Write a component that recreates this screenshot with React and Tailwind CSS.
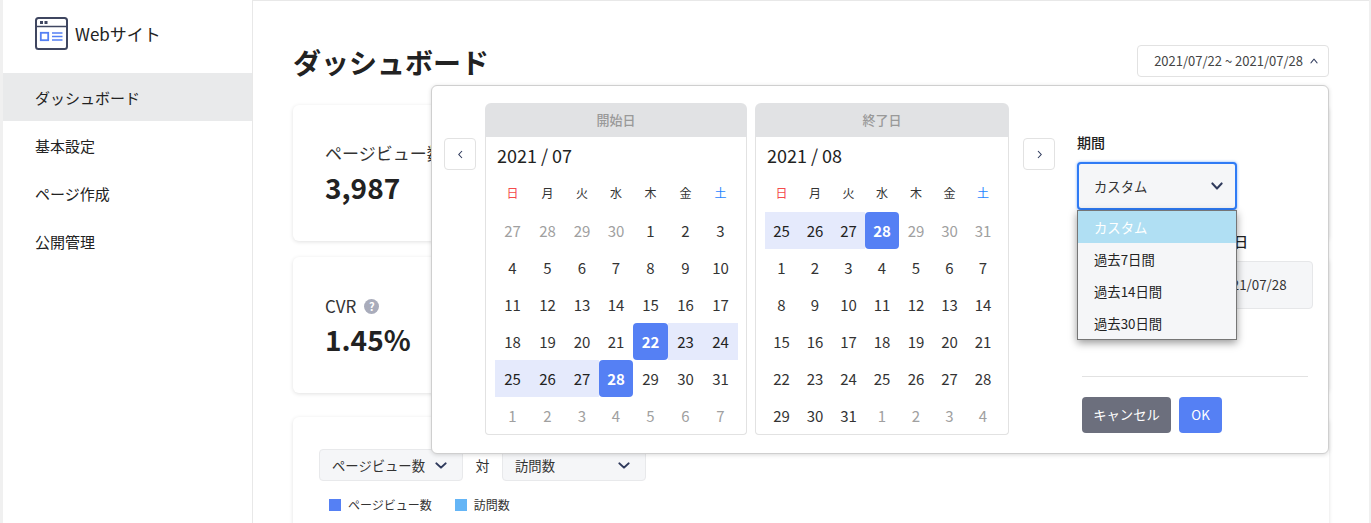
const font = { fontFamily: '"Noto Sans CJK JP", "Noto Sans", sans-serif' };

const Chevron = ({ up, w = 12, h = 8, sw = 2.2, className = "" }) => (
  <svg width={w} height={h} viewBox="0 0 13 8" preserveAspectRatio="none" className={className} fill="none" stroke="#2f3a5c" strokeWidth={sw} strokeLinecap="round" strokeLinejoin="round">
    <path d={up ? "M1.5 6.5 L6.5 1.5 L11.5 6.5" : "M1.5 1.5 L6.5 6.5 L11.5 1.5"} />
  </svg>
);

const Logo = () => (
  <svg width="33" height="33" viewBox="0 0 33 33" fill="none">
    <rect x="1" y="1" width="31" height="31" rx="2.5" stroke="#3f4660" strokeWidth="2" />
    <path d="M1 9.5 H32" stroke="#3f4660" strokeWidth="1.5" />
    <rect x="5" y="4" width="3" height="3" fill="#3f4660" />
    <rect x="9.5" y="4" width="3" height="3" fill="#3f4660" />
    <rect x="5.8" y="15.8" width="7.4" height="7.4" stroke="#5580f4" strokeWidth="1.8" />
    <path d="M17 16 H27.5 M17 19.5 H27.5 M17 23 H27.5" stroke="#5580f4" strokeWidth="1.6" />
  </svg>
);

const Nav = ({ label, active }) => (
  <div className={`h-12 flex items-center pl-8 pt-[2px] text-[15px] text-[#222] ${active ? "bg-[#e9eaeb]" : ""}`}>{label}</div>
);

const Sidebar = () => (
  <aside className="w-[250px] shrink-0 bg-white border-r border-[#e8e8e8]">
    <div className="h-[73px] flex items-start pl-8 pt-[17px] gap-[7px]">
      <Logo />
      <span className="text-[17px] leading-[33px] text-[#222]">Webサイト</span>
    </div>
    <Nav label="ダッシュボード" active />
    <Nav label="基本設定" />
    <Nav label="ページ作成" />
    <Nav label="公開管理" />
  </aside>
);

const StatCard = ({ label, value, help, className = "" }) => (
  <div className={`h-[136px] bg-white rounded-md shadow-[0_1px_4px_rgba(0,0,0,0.12)] pl-8 ${help ? "pt-[36px]" : "pt-[35px]"} ${className}`}>
    <div className="flex items-center gap-2 h-[26px] text-[17px] text-[#333]">
      {label}
      {help && (
        <span className="w-[15px] h-[15px] rounded-full bg-[#a9acbb] text-white text-[11px] font-bold flex items-center justify-center leading-none">?</span>
      )}
    </div>
    <div className={`text-[28px] font-semibold leading-[40px] text-[#222] ${help ? "mt-0" : "mt-px"}`}>{value}</div>
  </div>
);

const weekdays = ["日", "月", "火", "水", "木", "金", "土"];
const weekColor = ["text-[#f44b4b]", "text-[#333]", "text-[#333]", "text-[#333]", "text-[#333]", "text-[#333]", "text-[#1f86ff]"];

const Day = ({ n, kind }) => {
  const base = "h-[37px] flex items-center justify-center pt-px text-[15px]";
  if (kind === "muted") return <div className={`${base} text-[#a0a0a0]`}>{n}</div>;
  if (kind === "range") return <div className={`${base} bg-[#e5eafc] text-[#222]`}>{n}</div>;
  if (kind === "sel") return <div className={`${base} bg-[#5580f4] rounded-[4px] text-white font-bold`}>{n}</div>;
  return <div className={`${base} text-[#333]`}>{n}</div>;
};

const Calendar = ({ title, month, days, width, cols }) => (
  <div className={width}>
    <div className="h-[34px] bg-[#e1e2e4] rounded-t-md flex items-center justify-center text-[13px] font-medium text-[#999]">{title}</div>
    <div className="h-[298px] bg-white border border-t-0 border-[#e2e2e2] rounded-b-[4px] pl-[9px] pr-[8px]">
      <div className="h-[37px] pl-[2px] flex items-center text-[18px] text-[#222]">{month}</div>
      <div className={`grid h-[38px] items-center ${cols}`}>
        {weekdays.map((d, i) => (
          <div key={d} className={`text-center text-[12px] ${weekColor[i]}`}>{d}</div>
        ))}
      </div>
      <div className={`grid ${cols}`}>
        {days.map((d, i) => (
          <Day key={i} n={d[0]} kind={d[1]} />
        ))}
      </div>
    </div>
  </div>
);

const m = (a) => a.map((n) => [n, "muted"]);
const n = (a) => a.map((x) => [x, ""]);
const r = (a) => a.map((x) => [x, "range"]);

const julyDays = [
  ...m([27, 28, 29, 30]),
  ...n([1, 2, 3, 4, 5, 6, 7, 8, 9, 10, 11, 12, 13, 14, 15, 16, 17, 18, 19, 20, 21]),
  [22, "sel"],
  ...r([23, 24, 25, 26, 27]),
  [28, "sel"],
  ...n([29, 30, 31]),
  ...m([1, 2, 3, 4, 5, 6, 7]),
];

const augDays = [
  ...r([25, 26, 27]),
  [28, "sel"],
  ...m([29, 30, 31]),
  ...n(Array.from({ length: 31 }, (_, i) => i + 1)),
  ...m([1, 2, 3, 4]),
];

const ArrowBtn = ({ dir }) => (
  <button className="w-8 h-8 mt-[35px] shrink-0 bg-white border border-[#e2e2e2] rounded-[4px] flex items-center justify-center">
    <svg width="7" height="9" viewBox="0 0 7 9" fill="none" stroke="#2f3a5c" strokeWidth="1.1">
      <path d={dir === "left" ? "M5 1 L1.8 4.5 L5 8" : "M2 1 L5.2 4.5 L2 8"} />
    </svg>
  </button>
);

const DateField = ({ label, value }) => (
  <div>
    <div className="h-5 pl-px text-[14px] font-medium leading-5 text-[#222]">{label}</div>
    <div className="mt-[10px] h-12 bg-[#f5f6f8] border border-[#e6e7e9] rounded-[4px] flex items-center pl-[11px] text-[13.33px] text-[#333]">{value}</div>
  </div>
);

const PeriodColumn = () => (
  <div className="relative w-[236px] ml-[22px] pt-[29px]">
    <div className="h-5 text-[14px] font-medium leading-5 text-[#222]">期間</div>
    <div className="relative mt-[10px] w-40 h-12">
      <div className="h-12 bg-[#f5f6f8] border-2 border-[#2f7bf5] rounded-[4px] shadow-[0_0_3px_rgba(47,123,245,0.6)] flex items-center justify-between pl-[15px] pr-[12px] text-[13.33px] text-[#333]">
        <span className="pt-[2px]">カスタム</span>
        <Chevron />
      </div>
      <ul className="absolute z-10 top-12 left-0 w-40 bg-[#f5f6f8] border border-[#767676] shadow-[0_3px_8px_rgba(0,0,0,0.4)] text-[13.33px] text-[#222]">
        <li className="h-8 flex items-center pl-4 pt-[2px] bg-[#b0dff3] text-white">カスタム</li>
        <li className="h-8 flex items-center pl-4 pt-[2px]">過去7日間</li>
        <li className="h-8 flex items-center pl-4 pt-[2px]">過去14日間</li>
        <li className="h-8 flex items-center pl-4 pt-[2px]">過去30日間</li>
      </ul>
    </div>
    <div className="grid grid-cols-[120px_108px] gap-2 mt-[21px]">
      <DateField label="開始日" value="2021/07/22" />
      <DateField label="終了日" value="2021/07/28" />
    </div>
    <div className="mx-[5px] w-[226px] mt-[67px] border-t border-[#e2e2e2]" />
    <div className="flex gap-2 ml-[5px] mt-5">
      <button className="w-[89px] h-9 bg-[#6c6f7d] rounded-[4px] text-white text-[13.33px]">キャンセル</button>
      <button className="w-[43px] h-9 bg-[#5580f4] rounded-[4px] text-white text-[13.33px]">OK</button>
    </div>
  </div>
);

const Popup = () => (
  <div className="absolute z-20 top-[84px] left-[178px] w-[898px] h-[369px] bg-white border border-[#cfcfcf] rounded-md shadow-[0_1px_4px_rgba(0,0,0,0.15)] flex pl-[12px] pt-[17px]">
    <ArrowBtn dir="left" />
    <Calendar title="開始日" month="2021 / 07" days={julyDays} width="w-[262px] ml-[9px]" cols="grid-cols-[35px_35px_34px_34px_35px_35px_35px]" />
    <Calendar title="終了日" month="2021 / 08" days={augDays} width="w-[254px] ml-2" cols="grid-cols-[33px_34px_33px_34px_34px_33px_34px]" />
    <div className="ml-[14px]">
      <ArrowBtn dir="right" />
    </div>
    <PeriodColumn />
  </div>
);

const SelectBox = ({ label, className }) => (
  <div className={`h-8 bg-[#f5f6f8] border border-[#e8e9eb] rounded-[4px] flex items-center justify-between pl-3 pr-[15px] pt-px text-[13.33px] text-[#333] ${className}`}>
    {label}
    <Chevron h={7} />
  </div>
);

const Legend = ({ color, label, className = "" }) => (
  <div className={`flex items-center gap-[7px] text-[12px] text-[#333] ${className}`}>
    <span className={`w-3 h-3 ${color}`} />
    {label}
  </div>
);

export default function App() {
  return (
    <div style={font} className="h-[523px] overflow-hidden bg-[#f0f0f0] pl-[3px] pr-[2px] flex">
      <Sidebar />
      <main className="relative flex-1 bg-white border-t border-[#e8e8e8] pl-10 pr-10">
        <div className="flex items-start justify-between h-[104px]">
          <h1 className="text-[28px] font-bold leading-[40px] mt-[41px] text-[#222]">ダッシュボード</h1>
          <button className="mt-[44px] w-[192px] h-8 bg-white border border-[#e2e2e2] rounded-[4px] flex items-center justify-end gap-[7px] pr-[10px] text-[13px] text-[#444]">
            2021/07/22 ~ 2021/07/28
            <Chevron up w={8} h={6} sw={1.6} />
          </button>
        </div>
        <StatCard label="ページビュー数" value="3,987" />
        <StatCard label="CVR" value="1.45%" help className="mt-4" />
        <section className="mt-6 h-[200px] bg-white rounded-md shadow-[0_1px_4px_rgba(0,0,0,0.12)] pl-[26px] pt-8">
          <div className="flex items-center">
            <SelectBox label="ページビュー数" className="w-[144px]" />
            <span className="w-[39px] pt-px text-center text-[14px] text-[#333]">対</span>
            <SelectBox label="訪問数" className="w-[144px]" />
          </div>
          <div className="flex mt-[15px] ml-[10px]">
            <Legend color="bg-[#5580f4]" label="ページビュー数" />
            <Legend color="bg-[#64b5f6]" label="訪問数" className="ml-[23px]" />
          </div>
        </section>
        <Popup />
      </main>
    </div>
  );
}
